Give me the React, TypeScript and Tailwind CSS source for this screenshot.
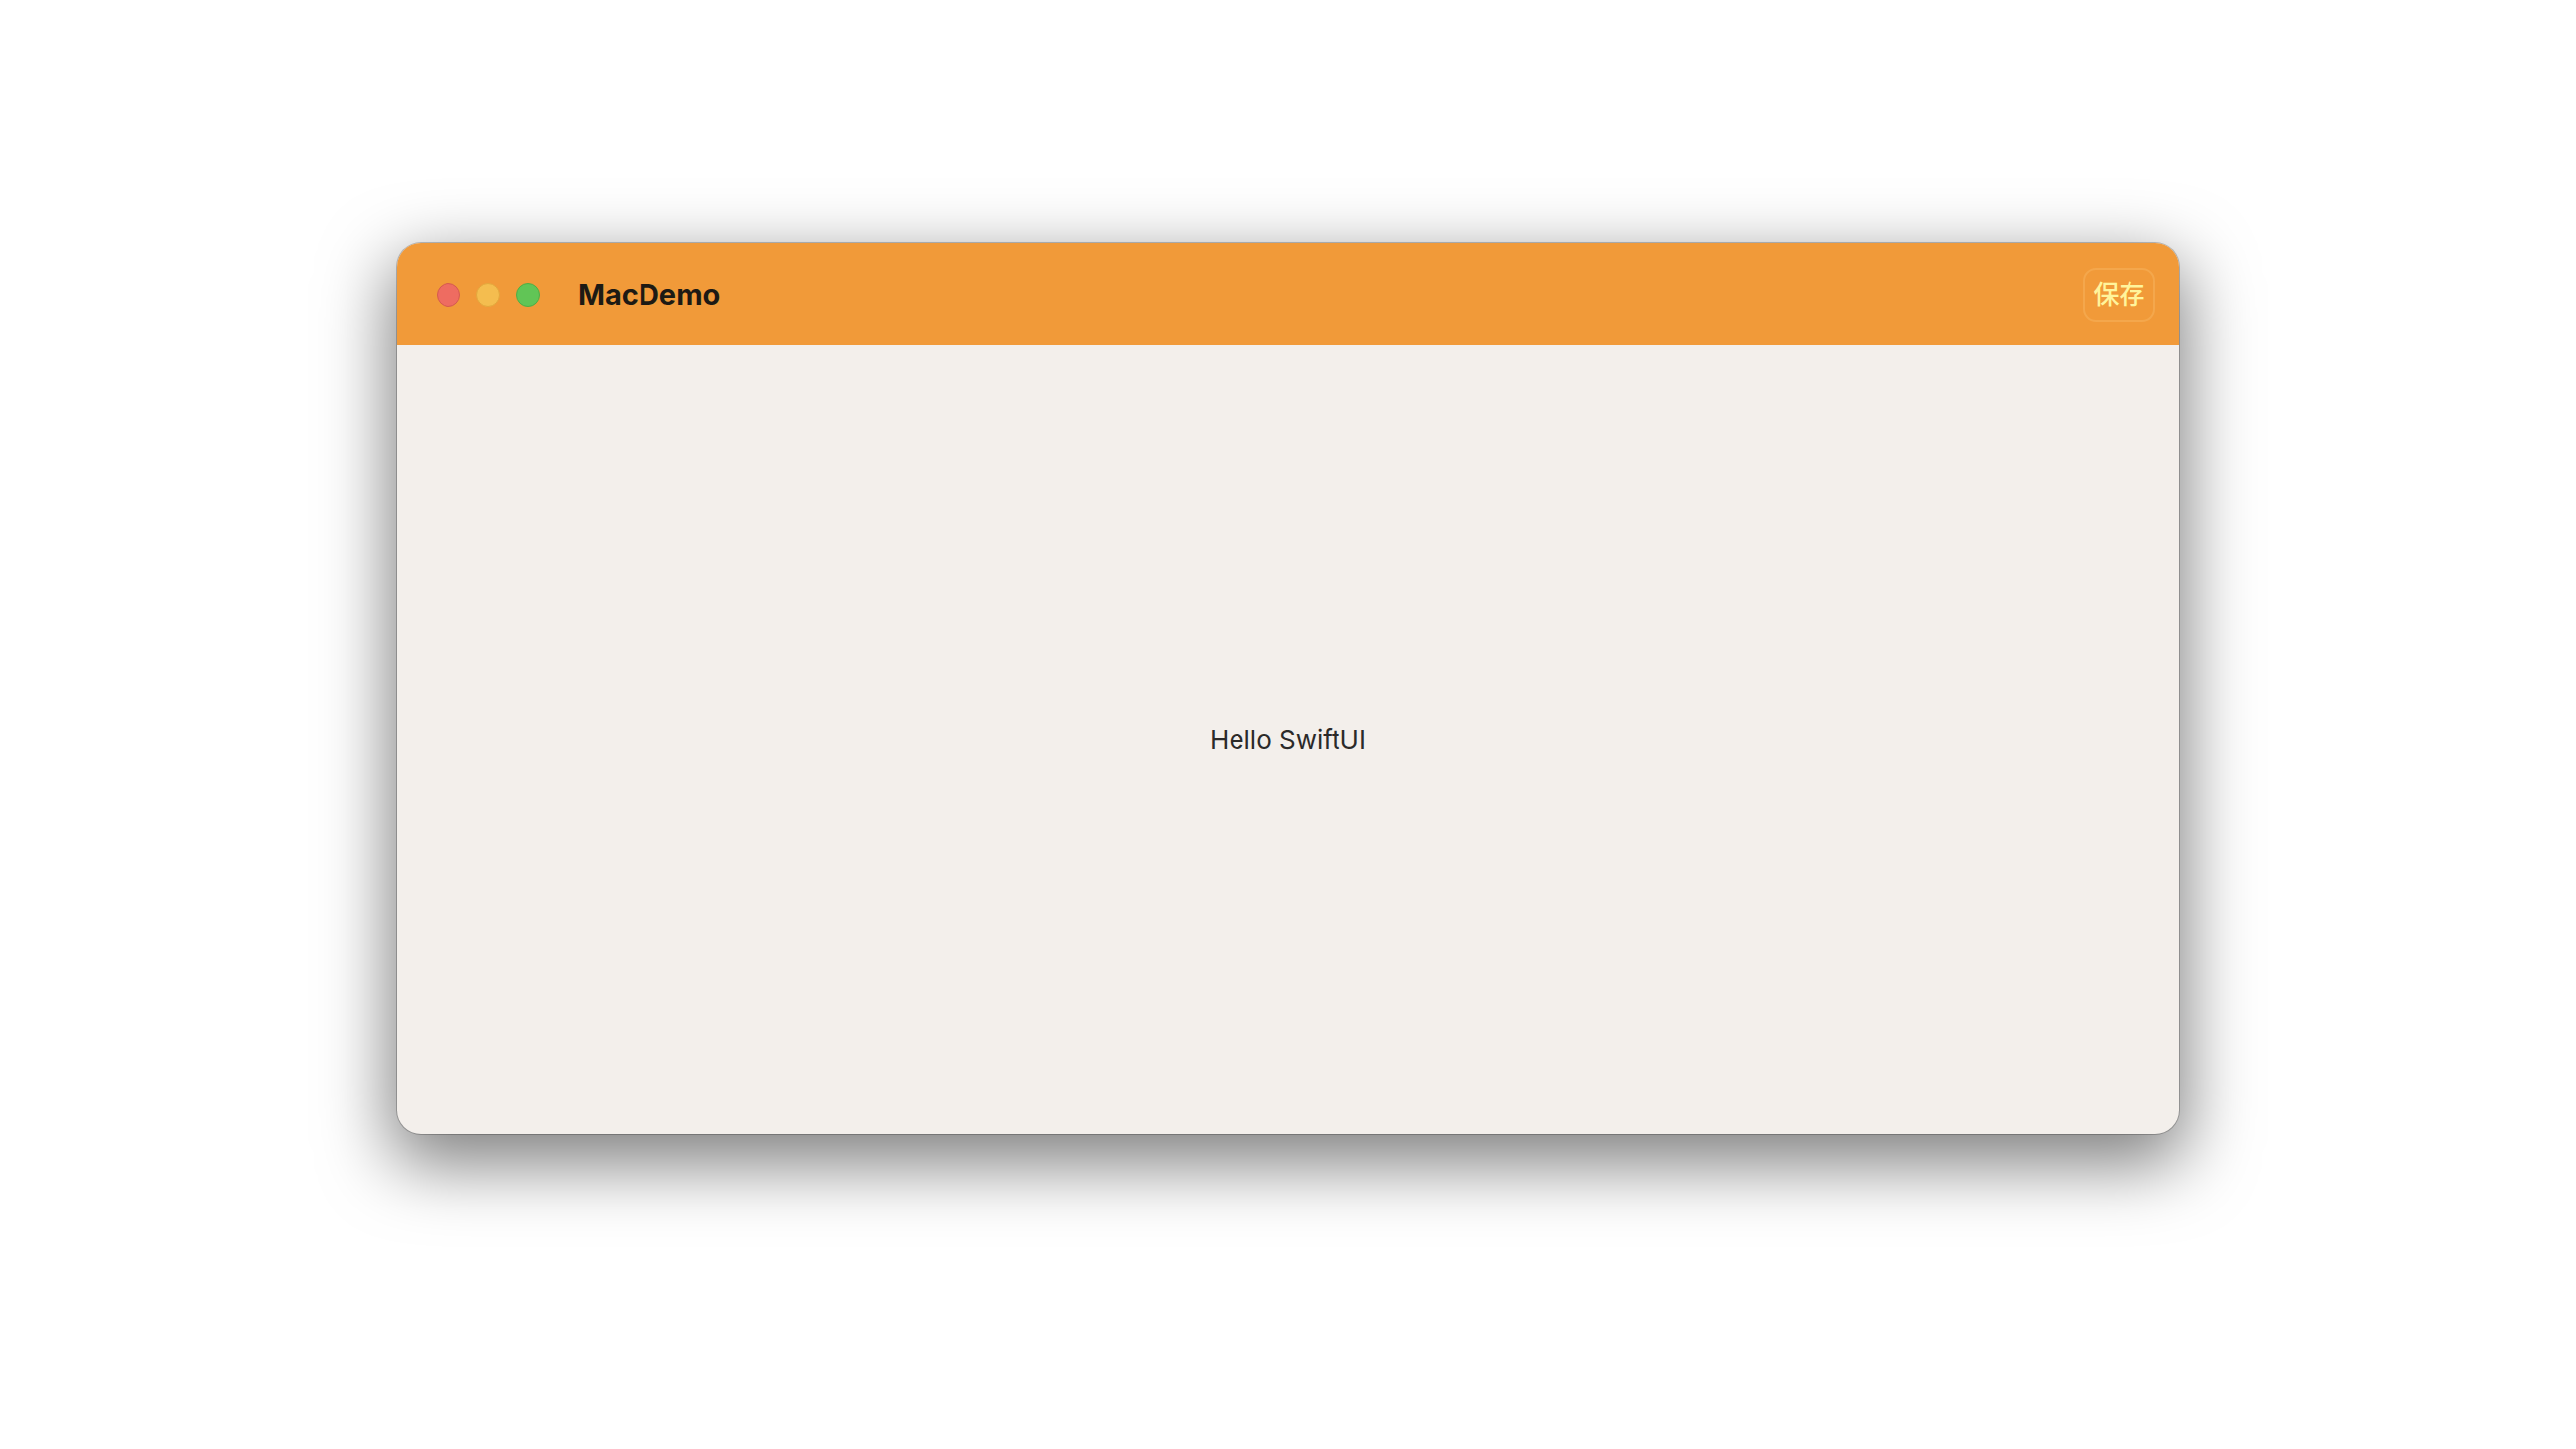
import React from 'react';

const TrafficLights = () => (
  <div className="flex items-center gap-4">
    <span className="h-6 w-6 rounded-full border border-[#d55a4f] bg-[#ee6c61]" />
    <span className="h-6 w-6 rounded-full border border-[#e3a73c] bg-[#f4bd4f]" />
    <span className="h-6 w-6 rounded-full border border-[#4fae45] bg-[#61c556]" />
  </div>
);

const App: React.FC = () => {
  return (
    <div className="flex h-[1464px] w-full items-center justify-center bg-white pb-[72px] font-['Inter','Noto_Sans_CJK_SC',sans-serif]">
      <div className="flex h-[900px] w-[1800px] flex-col overflow-hidden rounded-[24px] bg-[#f3efeb] shadow-[0_0_0_1px_rgba(0,0,0,0.22),0_24px_70px_6px_rgba(0,0,0,0.5)]">
        <div className="flex h-[103px] shrink-0 items-center bg-[#f19a39] pl-10 pr-6">
          <TrafficLights />
          <span className="ml-[39px] text-[29px] font-bold leading-none text-[#1d1a14]">MacDemo</span>
          <button className="ml-auto flex h-[54px] w-[73px] items-center justify-center rounded-[13px] border-2 border-[#f4a74c] text-[26px] font-medium leading-none text-[#fff49c]">
            保存
          </button>
        </div>
        <div className="flex flex-1 items-center justify-center">
          <span className="text-[26px] leading-none text-[#2b2a29]">Hello SwiftUI</span>
        </div>
      </div>
    </div>
  );
};

export default App;
